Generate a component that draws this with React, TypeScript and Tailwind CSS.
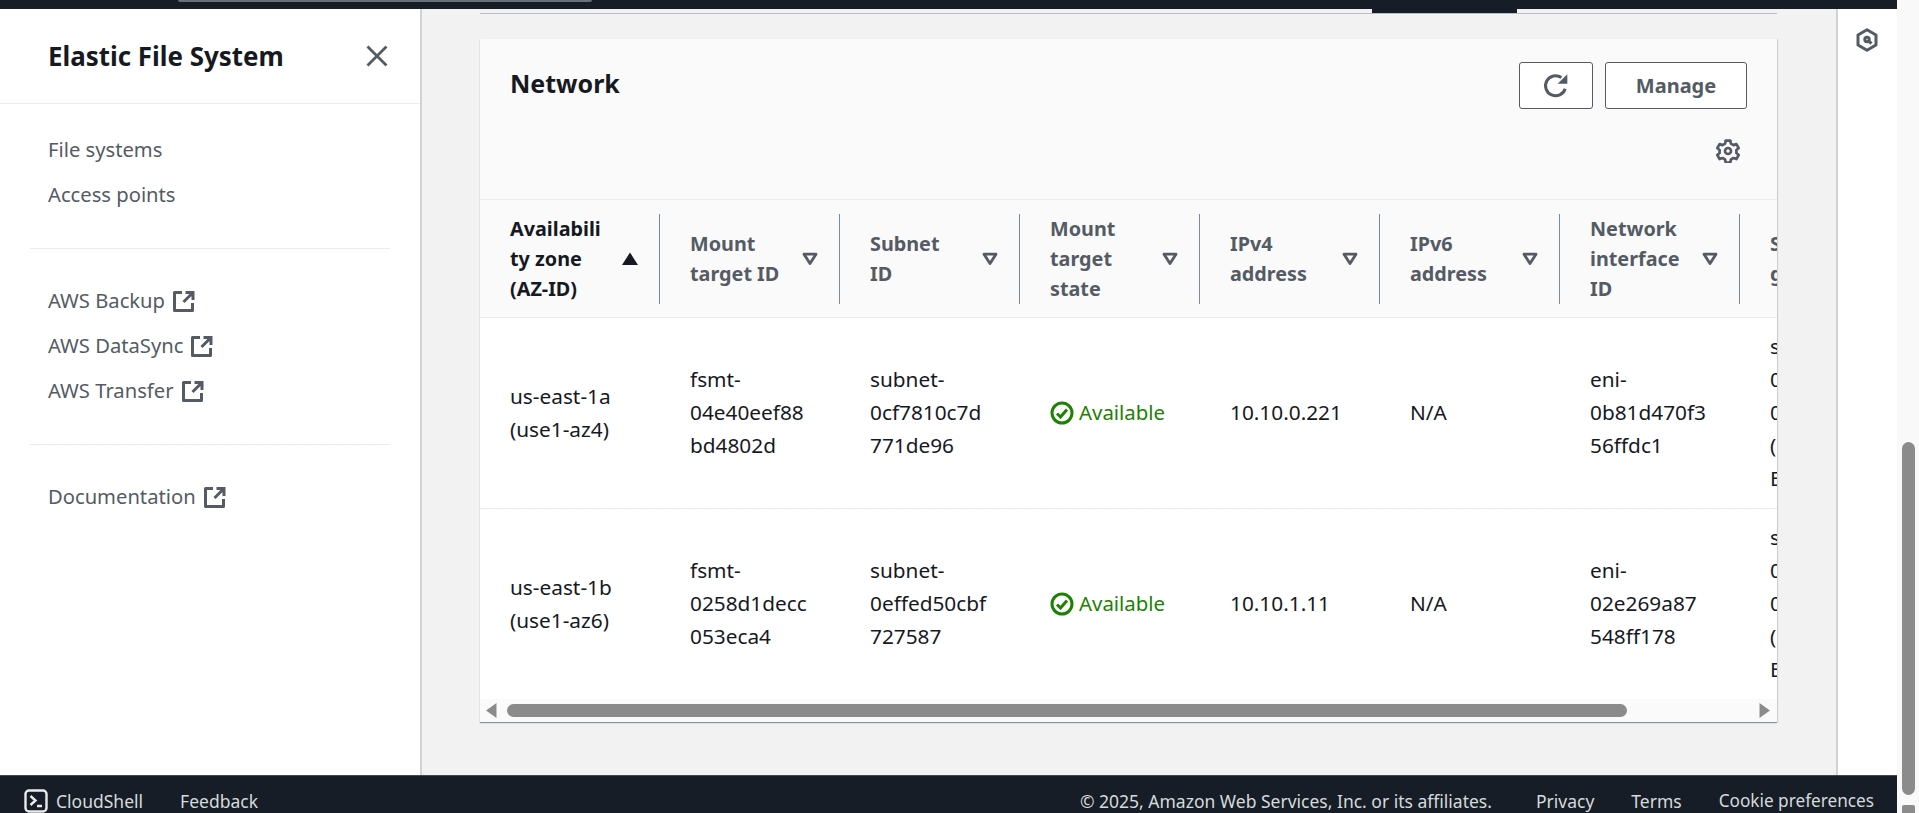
import React from "react";

const font = { fontFamily: '"Noto Sans", "Open Sans", sans-serif' };

function ExtLink() {
  return (
    <svg viewBox="0 0 22 22" className="w-[22px] h-[22px] shrink-0 ml-2" fill="none" stroke="#545b64" strokeWidth="3">
      <path d="M9 2.5H1.5v18h18V13" strokeLinejoin="round" />
      <path d="M12.5 2.5h7.5V10M19.5 3l-9 9" />
    </svg>
  );
}

function SortDown() {
  return (
    <svg viewBox="0 0 16 14" className="w-[16px] h-[14px] shrink-0" fill="none" stroke="#545b64" strokeWidth="2.8" strokeLinejoin="round">
      <path d="M2 2.2h12L8 11.5z" />
    </svg>
  );
}

function SortUp() {
  return (
    <svg viewBox="0 0 16 14" className="w-[16px] h-[14px] shrink-0" fill="#16191f">
      <path d="M8 .5 16 13H0z" />
    </svg>
  );
}

function CheckCircle() {
  return (
    <svg viewBox="0 0 24 24" className="w-[24px] h-[24px] shrink-0 mr-[5px]" fill="none" stroke="#1d8102" strokeWidth="3">
      <circle cx="12" cy="12" r="10" />
      <path d="m7 12.5 3.5 3.5L17 8.5" />
    </svg>
  );
}

function Cell({ lines }: { lines: string[] }) {
  return (
    <div className="pl-[30px] flex items-center py-[12px] text-[20.8px] leading-[33px] text-[#16191f] whitespace-nowrap">
      <div>
        {lines.map((l, i) => (
          <div key={i}>{l}</div>
        ))}
      </div>
    </div>
  );
}

function Head({ lines, active }: { lines: string[]; active?: boolean }) {
  return (
    <div className="flex items-center h-[117px]">
      <div className="w-full h-[90px] border-r border-[#7d8998] pl-[30px] pr-[21px] flex items-center justify-between">
        <div className={`text-[19.8px] leading-[30px] font-bold whitespace-nowrap ${active ? "text-[#16191f]" : "text-[#545b64]"}`}>
          {lines.map((l, i) => (
            <div key={i}>{l}</div>
          ))}
        </div>
        {active ? <SortUp /> : <SortDown />}
      </div>
    </div>
  );
}

function Status() {
  return (
    <div className="pl-[30px] flex items-center text-[20.4px] leading-[33px] text-[#1d8102]">
      <CheckCircle />
      Available
    </div>
  );
}

const headers: string[][] = [
  ["Availabili", "ty zone", "(AZ-ID)"],
  ["Mount", "target ID"],
  ["Subnet", "ID"],
  ["Mount", "target", "state"],
  ["IPv4", "address"],
  ["IPv6", "address"],
  ["Network", "interface", "ID"],
];

function Row({ az, mt, sn, ip, eni, border }: { az: string[]; mt: string[]; sn: string[]; ip: string; eni: string[]; border?: boolean }) {
  return (
    <div className={`grid grid-cols-[repeat(8,180px)] bg-white ${border ? "border-b border-[#e9ebed] pb-[1px]" : ""}`}>
      <Cell lines={az} />
      <Cell lines={mt} />
      <Cell lines={sn} />
      <Status />
      <Cell lines={[ip]} />
      <Cell lines={["N/A"]} />
      <Cell lines={eni} />
      <Cell lines={["sg-", "0", "0", "(", "E"]} />
    </div>
  );
}

export default function App() {
  return (
    <div className="flex h-[813px] w-full overflow-hidden bg-white" style={font}>
      <div className="flex flex-col w-[1897px] shrink-0">
        <div className="h-[9px] bg-[#161d26] shrink-0 pl-[178px]">
          <div className="w-[414px] h-[2px] bg-[#687078] rounded-b-[4px]" />
        </div>

        <div className="flex flex-1 min-h-0">
          <aside className="w-[422px] shrink-0 bg-white border-r-2 border-[#cfd2d6]">
            <div className="h-[95px] border-b border-[#e9ebed] pl-[48px] pr-[32px] flex items-center justify-between">
              <span className="text-[25.9px] font-bold leading-[30px] text-[#16191f]">Elastic File System</span>
              <svg viewBox="0 0 22 22" className="w-[22px] h-[22px]" stroke="#545b64" strokeWidth="2.8" fill="none">
                <path d="m1.5 1.5 19 19M20.5 1.5l-19 19" />
              </svg>
            </div>
            <nav className="text-[20.2px] leading-[33px] text-[#545b64]">
              <div className="pt-[29px] pb-[37px] pl-[48px] flex flex-col gap-[12px]">
                <div>File systems</div>
                <div>Access points</div>
              </div>
              <div className="mx-[30px] border-t border-[#e9ebed]" />
              <div className="pt-[35px] pb-[37px] pl-[48px] flex flex-col gap-[12px]">
                <div className="flex items-center">AWS Backup<ExtLink /></div>
                <div className="flex items-center">AWS DataSync<ExtLink /></div>
                <div className="flex items-center">AWS Transfer<ExtLink /></div>
              </div>
              <div className="mx-[30px] border-t border-[#e9ebed]" />
              <div className="pt-[35px] pl-[48px]">
                <div className="flex items-center">Documentation<ExtLink /></div>
              </div>
            </nav>
          </aside>

          <main className="flex-1 min-w-0 bg-[#f2f2f3] pl-[58px] pr-[59px]">
            <div className="h-[5px] border-b border-[#b6bec9] pl-[892px]">
              <div className="w-[145px] h-[4px] bg-[#161d26]" />
            </div>
            <section className="mt-[25px] h-[683px] bg-white shadow-[0_1px_1px_#879596,1px_0_1px_#d5dbdb] overflow-hidden flex flex-col">
              <div className="h-[161px] shrink-0 bg-[#fafafa] px-[30px] pt-[23px] flex justify-between border-b border-[#eaeded]">
                <h2 className="text-[25px] leading-[42px] font-bold text-[#16191f]">Network</h2>
                <div className="flex flex-col items-end">
                  <div className="flex gap-[12px]">
                    <button className="w-[74px] h-[47px] bg-white border border-[#545b64] rounded-[3px] flex items-center justify-center">
                      <svg viewBox="0 0 26 26" className="w-[28px] h-[28px]" fill="none" stroke="#545b64" strokeWidth="2.8">
                        <path d="M21.5 15.5A9.3 9.3 0 1 1 18 5.2" />
                        <path d="M23.5 2v9h-9z" fill="#545b64" stroke="none" />
                      </svg>
                    </button>
                    <button className="w-[142px] h-[47px] bg-white border border-[#545b64] rounded-[3px] text-[20px] font-bold text-[#545b64]">Manage</button>
                  </div>
                  <svg viewBox="0 0 24 24" className="w-[24px] h-[24px] mt-[30px] mr-[7px]" fill="none" stroke="#545b64" strokeWidth="2.7" strokeLinejoin="round">
                    <circle cx="12" cy="12" r="3" />
                    <path d="M9.7 1.6h4.6l.6 3 2.6 1.5 2.9-1 2.3 4-2.3 2v2.9l2.3 2-2.3 4-2.9-1-2.6 1.5-.6 3H9.7l-.6-3-2.6-1.5-2.9 1-2.3-4 2.3-2v-2.9l-2.3-2 2.3-4 2.9 1 2.6-1.5z" />
                  </svg>
                </div>
              </div>

              <div className="overflow-hidden flex-1 min-h-0">
                <div className="w-[1440px]">
                  <div className="grid grid-cols-[repeat(8,180px)] bg-[#fafafa] border-b border-[#eaeded]">
                    {headers.map((h, i) => (
                      <Head key={i} lines={h} active={i === 0} />
                    ))}
                    <div className="pl-[30px] flex items-center text-[19.8px] leading-[30px] font-bold text-[#545b64]">
                      <div>
                        <div>Security</div>
                        <div>groups</div>
                      </div>
                    </div>
                  </div>
                  <Row
                    border
                    az={["us-east-1a", "(use1-az4)"]}
                    mt={["fsmt-", "04e40eef88", "bd4802d"]}
                    sn={["subnet-", "0cf7810c7d", "771de96"]}
                    ip="10.10.0.221"
                    eni={["eni-", "0b81d470f3", "56ffdc1"]}
                  />
                  <Row
                    az={["us-east-1b", "(use1-az6)"]}
                    mt={["fsmt-", "0258d1decc", "053eca4"]}
                    sn={["subnet-", "0effed50cbf", "727587"]}
                    ip="10.10.1.11"
                    eni={["eni-", "02e269a87", "548ff178"]}
                  />
                </div>
              </div>

              <div className="h-[23px] shrink-0 bg-[#fafafa] flex items-center pl-[6px] pr-[7px]">
                <svg viewBox="0 0 11 15" className="w-[11px] h-[15px] shrink-0"><path d="M10.5 0v15L0 7.5z" fill="#8b8b8b" /></svg>
                <div className="ml-[10px] w-[1120px] h-[13px] rounded-full bg-[#8b8b8b]" />
                <div className="flex-1" />
                <svg viewBox="0 0 11 15" className="w-[11px] h-[15px] shrink-0"><path d="M.5 0v15L11 7.5z" fill="#8b8b8b" /></svg>
              </div>
            </section>
          </main>

          <div className="w-[61px] shrink-0 bg-white border-l-2 border-[#cfd2d6] flex justify-center pt-[19px] pr-[1px]">
            <svg viewBox="0 0 24 24" className="w-[24px] h-[24px]" fill="none" stroke="#545b64" strokeWidth="3" strokeLinejoin="round">
              <path d="M12 1.8 21 7v10l-9 5.2L3 17V7z" />
              <circle cx="12" cy="11.5" r="2.2" />
              <path d="m13.5 13 3 2.5" />
            </svg>
          </div>
        </div>

        <footer className="h-[38px] shrink-0 bg-[#161d26] border-t border-[#414750] flex items-center justify-between pt-[13px] pl-[24px] pr-[23px] text-[17.5px] leading-[24px] text-[#d5dbdb]">
          <div className="flex items-center">
            <svg viewBox="0 0 24 24" className="w-[24px] h-[24px] mr-[8px]" fill="none" stroke="#e9ebed" strokeWidth="2.4">
              <rect x="1.5" y="1.5" width="21" height="21" rx="3.5" />
              <path d="m6.5 7 5 4.5-5 4.5M13 17h5" />
            </svg>
            <span>CloudShell</span>
            <span className="ml-[37px]">Feedback</span>
          </div>
          <div className="flex items-center">
            <span>© 2025, Amazon Web Services, Inc. or its affiliates.</span>
            <span className="ml-[44px]">Privacy</span>
            <span className="ml-[37px]">Terms</span>
            <span className="ml-[37px] text-[17.2px]">Cookie preferences</span>
          </div>
        </footer>
      </div>

      <div className="w-[22px] shrink-0 bg-[#f9f9f9] flex flex-col items-center pt-[442px]">
        <div className="w-[13px] h-[358px] rounded-full bg-[#8b8b8b]" />
        <div className="mt-[10px] w-[13px] h-[8px] rounded-t-[2px] bg-[#8b8b8b]" />
      </div>
    </div>
  );
}
